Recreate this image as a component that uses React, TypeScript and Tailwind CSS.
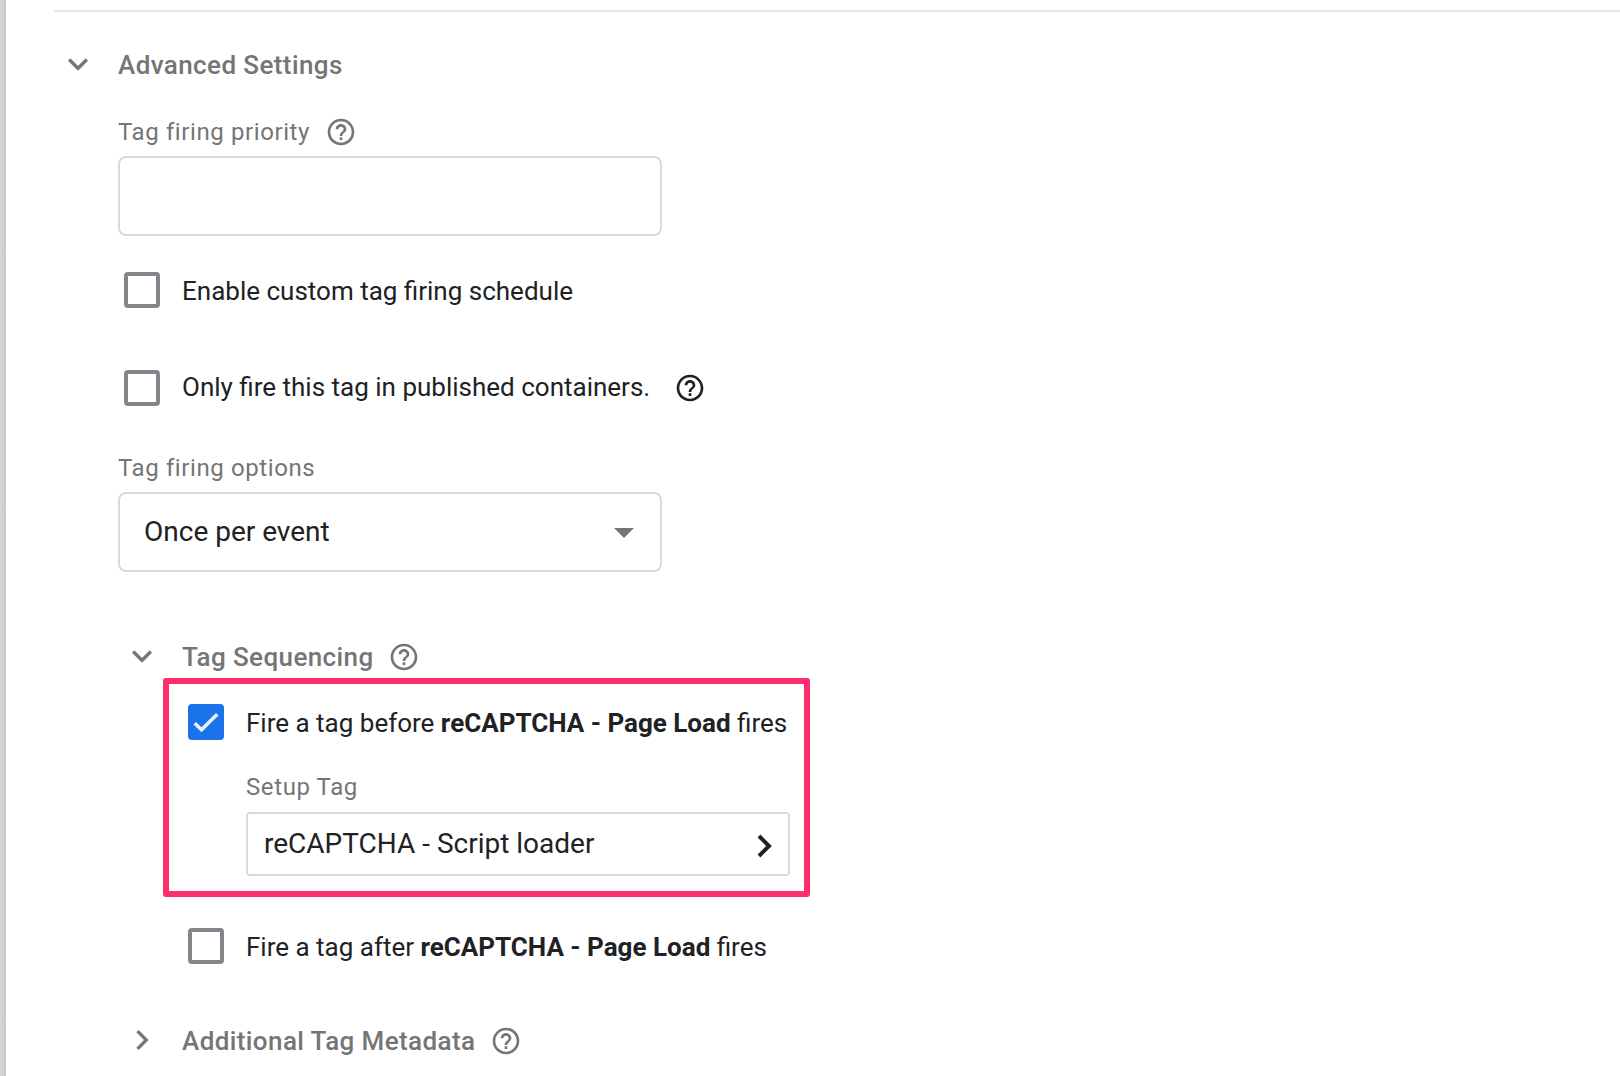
import React from "react";

const HELP =
  "M11 18h2v-2h-2v2zm1-16C6.48 2 2 6.48 2 12s4.48 10 10 10 10-4.48 10-10S17.52 2 12 2zm0 18c-4.41 0-8-3.59-8-8s3.59-8 8-8 8 3.59 8 8-3.59 8-8 8zm0-14c-2.21 0-4 1.79-4 4h2c0-1.1.9-2 2-2s2 .9 2 2c0 2-3 1.75-3 5h2c0-2.25 3-2.5 3-5 0-2.21-1.79-4-4-4z";

function Help({ className = "" }: { className?: string }) {
  return (
    <svg viewBox="0 0 24 24" className={`size-8 shrink-0 fill-current ${className}`} aria-hidden="true">
      <path d={HELP} />
    </svg>
  );
}

function Chevron({ open = false }: { open?: boolean }) {
  return (
    <svg viewBox="0 0 24 24" className="mr-5 mb-0.5 -ml-1 size-10 shrink-0 fill-current" aria-hidden="true">
      <path
        d={
          open
            ? "M7.41 8.59 12 13.17l4.59-4.58L18 10l-6 6-6-6 1.41-1.41z"
            : "M8.59 16.59 13.17 12 8.59 7.41 10 6l6 6-6 6-1.41-1.41z"
        }
      />
    </svg>
  );
}

function Checkbox({ checked = false }: { checked?: boolean }) {
  if (!checked) {
    return <span className="size-9 shrink-0 rounded-[4px] border-4 border-[#80868b]" />;
  }
  return (
    <span className="flex size-9 shrink-0 items-center justify-center rounded-[4px] bg-[#1a73e8]">
      <svg viewBox="0 0 36 36" className="size-9" fill="none" stroke="#e8f0fe" strokeWidth="3.6" aria-hidden="true">
        <path d="M6.7 19.2l6.8 6.6L29.3 10.2" />
      </svg>
    </span>
  );
}

export default function App() {
  return (
    <div className="flex h-[1076px] w-full overflow-hidden bg-white font-['Roboto',sans-serif] text-[26px] leading-8 text-[#202124]">
      <div className="w-1.5 shrink-0 bg-linear-to-r from-[#d4d9d8] to-[#c7cccb]" />
      <main className="flex grow flex-col">
        <div className="mt-2.5 ml-12 h-0.5 shrink-0 bg-[#e8e8e8]" />

        <h2 className="mt-[37px] ml-14 flex h-8 items-center font-medium tracking-[0.4px] text-[#757575]">
          <Chevron open />
          <span>Advanced Settings</span>
        </h2>

        <section className="ml-28 flex flex-col">
          <div className="mt-[35px] flex h-8 items-center text-2xl tracking-[0.6px] text-[#757575]">
            <span>Tag firing priority</span>
            <Help className="ml-[14.5px]" />
          </div>
          <div className="mt-2 h-20 w-[544px] rounded-lg border-2 border-[#dadada]" />

          <label className="mt-9 ml-1.5 flex h-9 items-center">
            <Checkbox />
            <span className="mt-0.5 ml-[22px]">Enable custom tag firing schedule</span>
          </label>
          <label className="mt-[62px] ml-1.5 flex h-9 items-center">
            <Checkbox />
            <span className="mb-0.5 ml-[22px]">Only fire this tag in published containers.</span>
            <Help className="ml-6" />
          </label>

          <div className="mt-[46px] flex h-8 items-center text-2xl tracking-[0.6px] text-[#757575]">
            Tag firing options
          </div>
          <div className="mt-2 flex h-20 w-[544px] items-center justify-between rounded-lg border-2 border-[#dadada] px-6 text-[28px]">
            <span>Once per event</span>
            <svg viewBox="0 0 20 10" className="mt-0.5 mr-0.5 h-2.5 w-5 fill-[#757575]" aria-hidden="true">
              <path d="M0 0h20L10 10z" />
            </svg>
          </div>

          <h3 className="mt-[69px] ml-2 flex h-8 items-center font-medium tracking-[0.4px] text-[#757575]">
            <Chevron open />
            <span>Tag Sequencing</span>
            <Help className="ml-[14.5px]" />
          </h3>

          <div className="mt-[5px] ml-[45px] h-[219px] w-[647px] rounded-[3px] border-6 border-[#ff2d6b] pt-5 pl-[19px]">
            <label className="flex h-9 items-center">
              <Checkbox checked />
              <span className="mt-0.5 ml-[22px]">
                Fire a tag before <b>reCAPTCHA - Page Load</b> fires
              </span>
            </label>
            <div className="mt-[31px] ml-[58px] h-8 text-2xl tracking-[0.6px] text-[#757575]">
              <p className="leading-8">Setup Tag</p>
            </div>
            <div className="mt-[9px] ml-[58px] flex h-16 w-[544px] items-center justify-between rounded-[4px] border-2 border-[#dadada] pl-4 text-[28px]">
              <span>reCAPTCHA - Script loader</span>
              <svg
                viewBox="0 0 16 24"
                className="mt-[3px] mr-[15px] h-6 w-4"
                fill="none"
                stroke="#202124"
                strokeWidth="4"
                aria-hidden="true"
              >
                <path d="M2 2l10 10L2 22" />
              </svg>
            </div>
          </div>

          <label className="mt-[31px] ml-[70px] flex h-9 items-center">
            <Checkbox />
            <span className="mt-0.5 ml-[22px]">
              Fire a tag after <b>reCAPTCHA - Page Load</b> fires
            </span>
          </label>

          <h3 className="mt-[61px] ml-2 flex h-8 items-center font-medium tracking-[0.4px] text-[#757575]">
            <Chevron />
            <span>Additional Tag Metadata</span>
            <Help className="ml-[14.5px]" />
          </h3>
        </section>
      </main>
    </div>
  );
}
